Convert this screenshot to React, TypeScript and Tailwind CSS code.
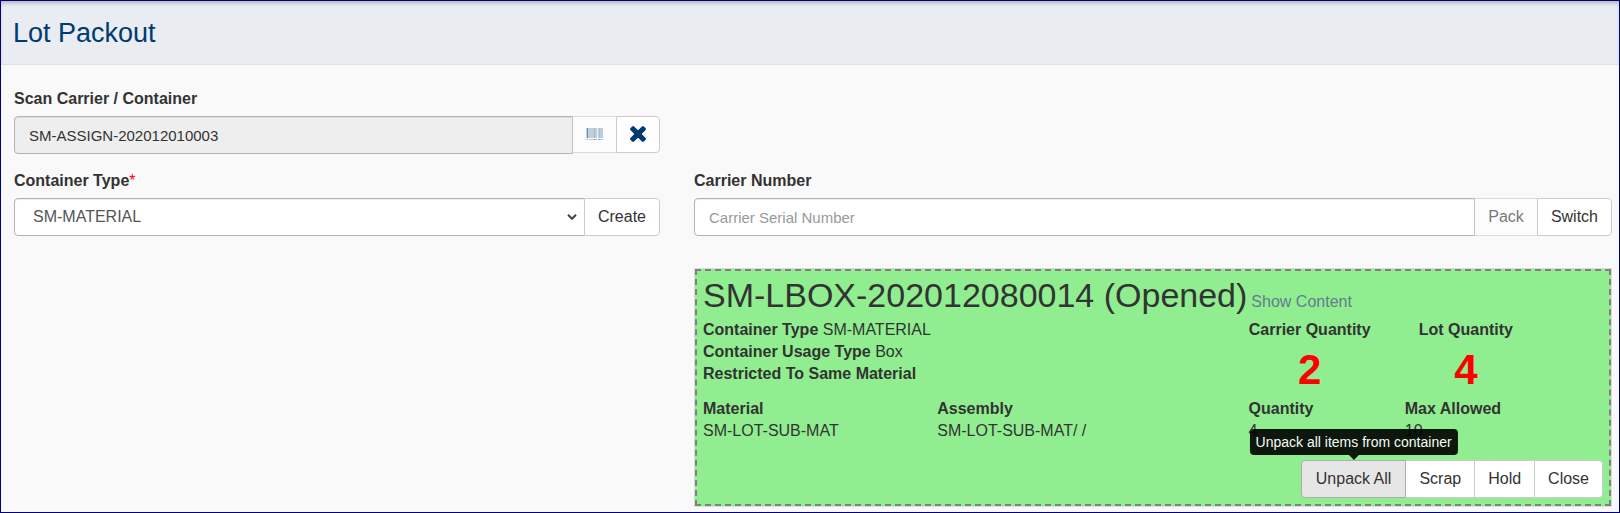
import type { ButtonHTMLAttributes, ReactNode } from 'react';

const btn =
  'relative flex shrink-0 items-center border border-[#ccc] bg-white pb-px text-[16px] leading-[22px] text-[#333]';

function Button({
  className = 'h-[38px] px-[13px]',
  children,
  ...rest
}: ButtonHTMLAttributes<HTMLButtonElement> & { children: ReactNode }) {
  return (
    <button type="button" className={`${btn} ${className}`} {...rest}>
      {children}
    </button>
  );
}

function BarcodeIcon() {
  return (
    <svg width="17" height="12" viewBox="0 0 17 12" fill="#003a70" aria-hidden="true">
      <rect x="0" y="0" width="17" height="10" opacity=".36" />
      <rect x="1" y="0" width="1" height="10" fill="#0b4f94" opacity=".9" />
      <rect x="8" y="0" width="1" height="10" opacity=".25" />
      <rect x="13" y="0" width="1" height="10" opacity=".2" />
      <rect x="11" y="0" width="1" height="10" fill="#fff" opacity=".7" />
      <rect x="0" y="11" width="2" height="1" opacity=".4" />
      <rect x="3" y="11" width="14" height="1" opacity=".4" />
      <rect x="8" y="11" width="1" height="1" opacity=".8" />
      <rect x="13" y="11" width="1" height="1" opacity=".8" />
    </svg>
  );
}

function TimesIcon() {
  return (
    <svg width="16" height="16" viewBox="302 366 1188 1188" fill="#003a70" aria-hidden="true">
      <path d="M1490 1322q0 40-28 68l-136 136q-28 28-68 28t-68-28l-294-294-294 294q-28 28-68 28t-68-28l-136-136q-28-28-28-68t28-68l294-294-294-294q-28-28-28-68t28-68l136-136q28-28 68-28t68 28l294 294 294-294q28-28 68-28t68 28l136 136q28 28 28 68t-28 68l-294 294 294 294q28 28 28 68z" />
    </svg>
  );
}

const field =
  'h-[38px] min-w-0 flex-1 rounded-l border border-[#b3b3b3] shadow-[inset_0_1px_1px_rgba(0,0,0,0.075)] outline-none';

export default function App() {
  return (
    <div className="min-h-screen overflow-hidden border border-[#000080] bg-[#f9f9f9] font-['Liberation_Sans',Arial,sans-serif] text-[16px] leading-[22px] text-[#333]">
      <header className="border-b border-[#dbe0ea] bg-[#e9ecf1] px-3 pt-[17px] pb-[15px] shadow-[inset_0_4px_4px_-2px_rgba(0,0,0,0.25)]">
        <h1 className="text-[27px] leading-[31px] text-[#003a70]">Lot Packout</h1>
      </header>

      <main className="grid grid-cols-[646fr_918fr] gap-x-[34px] gap-y-4 pt-[23px] pr-[7px] pl-[13px]">
        <div>
          <label htmlFor="scan" className="mb-[6px] block font-bold">
            Scan Carrier / Container
          </label>
          <div className="flex items-start">
            <input
              id="scan"
              readOnly
              value="SM-ASSIGN-202012010003"
              className={`${field} bg-[#eee] px-[14px] text-[15px] text-[#333]`}
            />
            <Button disabled aria-label="Scan barcode" className="-ml-px h-[37px] px-[13px] pb-[6px] opacity-65">
              <BarcodeIcon />
            </Button>
            <Button aria-label="Clear" className="-ml-px h-[37px] rounded-r px-[13px] pb-[6px]">
              <TimesIcon />
            </Button>
          </div>
        </div>

        <div className="col-start-1 row-start-2">
          <label htmlFor="type" className="mb-[6px] block font-bold">
            Container Type<span className="font-normal text-[#f00]">*</span>
          </label>
          <div className="flex">
            <div className="relative flex min-w-0 flex-1">
              <select id="type" className={`${field} appearance-none bg-white px-[18px] text-[#555]`}>
                <option>SM-MATERIAL</option>
              </select>
              <svg
                width="10"
                height="6"
                viewBox="0 0 10 6"
                className="pointer-events-none absolute top-4 right-2"
                aria-hidden="true"
              >
                <path d="M1 .8l4 4 4-4" fill="none" stroke="#444" strokeWidth="2" />
              </svg>
            </div>
            <Button className="-ml-px h-[38px] rounded-r px-[13px]">Create</Button>
          </div>
        </div>

        <div className="col-start-2 row-start-2">
          <label htmlFor="carrier" className="mb-[6px] block font-bold">
            Carrier Number
          </label>
          <div className="flex">
            <input
              id="carrier"
              placeholder="Carrier Serial Number"
              className={`${field} bg-white px-[14px] text-[15px] text-[#555] placeholder:text-[#999]`}
            />
            <Button disabled className="-ml-px h-[38px] px-[13px] opacity-65">
              Pack
            </Button>
            <Button className="-ml-px h-[38px] rounded-r px-[13px]">Switch</Button>
          </div>
        </div>

        <section className="col-start-2 row-start-3 mt-4 border border-[#ddd]">
          <div className="border-2 border-dashed border-[#808080] bg-[#90ee90] px-[6px] pt-[2px] pb-[6px]">
            <div className="mb-[2px] flex items-baseline gap-1 whitespace-nowrap">
              <h2 className="text-[34px] leading-[44px]">SM-LBOX-202012080014 (Opened)</h2>
              <a href="#content" className="text-[#647c8e]">
                Show Content
              </a>
            </div>

            <div className="grid grid-cols-[528fr_156fr_156fr_59fr]">
              <div>
                <p>
                  <b>Container Type</b> SM-MATERIAL
                </p>
                <p>
                  <b>Container Usage Type</b> Box
                </p>
                <p>
                  <b>Restricted To Same Material</b>
                </p>
              </div>
              <div className="text-center font-bold">
                <p>Carrier Quantity</p>
                <p className="text-[42px] leading-[57px] text-[#f00]">2</p>
              </div>
              <div className="text-center font-bold">
                <p>Lot Quantity</p>
                <p className="text-[42px] leading-[57px] text-[#f00]">4</p>
              </div>
            </div>

            <dl className="grid grid-cols-[234fr_311fr_156fr_198fr]">
              <div>
                <dt className="font-bold">Material</dt>
                <dd>SM-LOT-SUB-MAT</dd>
              </div>
              <div>
                <dt className="font-bold">Assembly</dt>
                <dd>SM-LOT-SUB-MAT/ /</dd>
              </div>
              <div>
                <dt className="font-bold">Quantity</dt>
                <dd>4</dd>
              </div>
              <div>
                <dt className="font-bold">Max Allowed</dt>
                <dd>10</dd>
              </div>
            </dl>

            <div className="mt-[18px] flex justify-end">
              <div className="relative z-10">
                <div
                  id="unpack-tip"
                  role="tooltip"
                  className="absolute bottom-full left-1/2 -translate-x-1/2 pb-[5px] opacity-90"
                >
                  <div className="rounded bg-black px-[6px] py-[3px] text-[14px] leading-[20px] whitespace-nowrap text-white">
                    Unpack all items from container
                  </div>
                  <svg width="10" height="5" viewBox="0 0 10 5" className="absolute bottom-0 left-1/2 -translate-x-1/2" aria-hidden="true">
                    <path d="M0 0h10l-5 5z" />
                  </svg>
                </div>
                <Button
                  aria-describedby="unpack-tip"
                  className="h-[38px] rounded-l border-[#adadad]! bg-[#e6e6e6]! px-[14px]"
                >
                  Unpack All
                </Button>
              </div>
              <Button className="-ml-px h-[38px] px-[13px]">Scrap</Button>
              <Button className="-ml-px h-[38px] px-[13px]">Hold</Button>
              <Button className="-ml-px h-[38px] rounded-r px-[13px]">Close</Button>
            </div>
          </div>
        </section>
      </main>
    </div>
  );
}
